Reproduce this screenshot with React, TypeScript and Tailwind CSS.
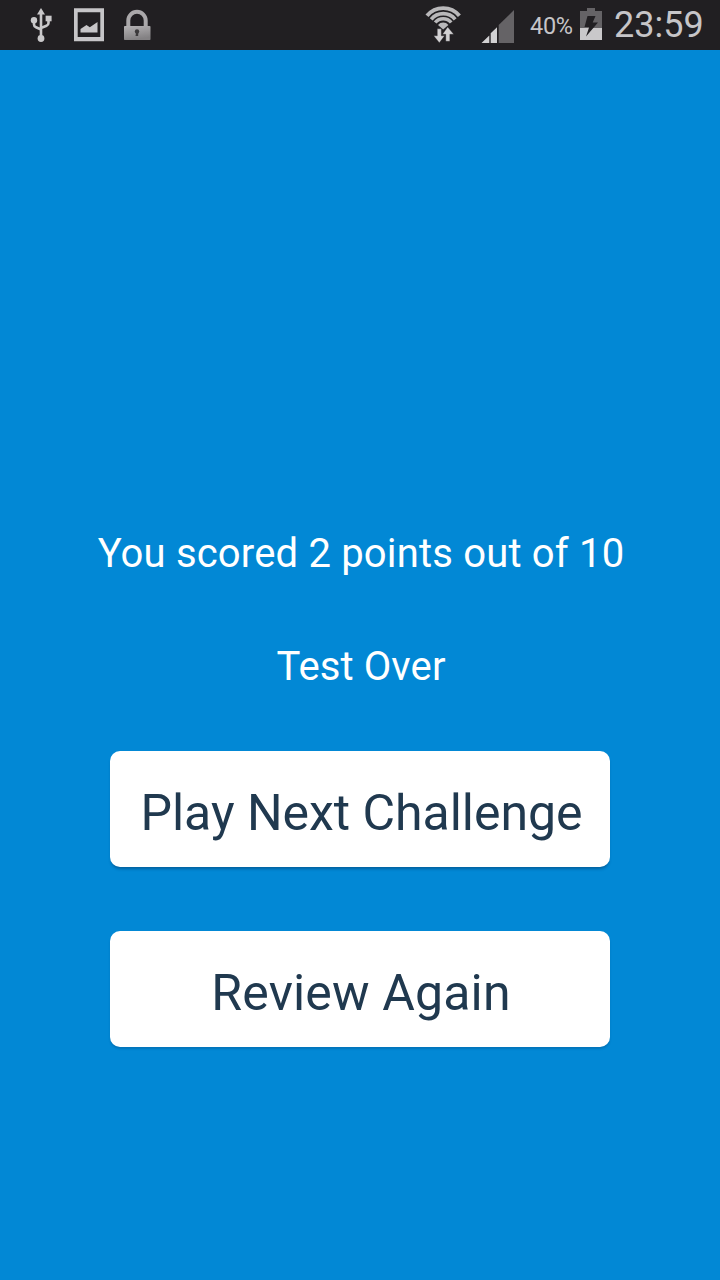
import type { ReactNode } from 'react'

function UsbIcon() {
  return (
    <svg width="22" height="50" viewBox="0 0 22 50" className="ml-[30px] shrink-0" fill="#c9c8ca">
      <path d="M11 8l4 6.500H7z" />
      <path d="M11 12v26M4 20v4.500q0 2 2 2.800l5 2.200M18.500 19v4q0 2-2 2.800L11 28" fill="none" stroke="#c9c8ca" strokeWidth="2.6" />
      <circle cx="4" cy="20.300" r="3.200" />
      <path d="M15.600 15.700h6v5.600h-6z" />
      <circle cx="11" cy="38.500" r="3.400" />
    </svg>
  )
}

function PictureIcon() {
  return (
    <svg width="30" height="50" viewBox="0 0 30 50" className="ml-[22px] shrink-0" fill="#c6c5c8">
      <path fillRule="evenodd" d="M0 8.300h30v33H0zM3.700 12.300v24.700h22.600V12.300z" />
      <path d="M6.500 32.500v-3.500l6-4 3.300 2.200 7.700-5.200v10.500z" />
    </svg>
  )
}

function LockIcon() {
  return (
    <svg width="28" height="50" viewBox="0 0 28 50" className="ml-[19px] shrink-0">
      <defs>
        <linearGradient id="lockBody" x1="0" y1="0" x2="0.3" y2="1">
          <stop offset="0" stopColor="#b4b2b4" />
          <stop offset="1" stopColor="#838183" />
        </linearGradient>
      </defs>
      <path d="M5.300 27v-6.500a8.700 8.700 0 0 1 17.400 0V27" fill="none" stroke="#aaa8aa" strokeWidth="4" />
      <rect x="1" y="26" width="26.500" height="14" rx="0.800" fill="url(#lockBody)" />
      <circle cx="14" cy="31.500" r="2.200" fill="#3c3a3c" />
      <path d="M13.200 32h2v4h-2.700z" fill="#3c3a3c" />
    </svg>
  )
}

function WifiIcon() {
  return (
    <svg width="38" height="50" viewBox="0 0 38 50" className="shrink-0">
      <g fill="none" stroke="#b9b8ba">
        <path d="M2 15.800a21 21 0 0 1 32.400 0" strokeWidth="3.900" />
        <path d="M6.200 19.300a15.500 15.500 0 0 1 24 0" strokeWidth="3.700" />
        <path d="M10.200 22.500a10.300 10.300 0 0 1 16 0" strokeWidth="3.500" />
      </g>
      <path d="M13 25a6.700 6.700 0 0 1 10.400 0L18.200 29.500z" fill="#b9b8ba" />
      <path
        d="M12.300 28.800h4v7h3.300L14.300 42.700l-5.600-6.900h3.600zM24.800 41.300h-4v-7h-3.300l5.200-7.300 6 7.300h-3.900z"
        fill="#d2d1d3"
        stroke="#211f22"
        strokeWidth="0.300"
      />
    </svg>
  )
}

function SignalIcon() {
  return (
    <svg width="34" height="50" viewBox="0 0 34 50" className="ml-[18px] shrink-0">
      <path d="M0.500 43l7.800-7.500V43zM9.700 33.300l6.300-6V43H9.700z" fill="#d2d1d3" />
      <path d="M17.700 25L33 10v33H17.700z" fill="#656366" />
    </svg>
  )
}

function BatteryIcon() {
  return (
    <svg width="22" height="50" viewBox="0 0 22 50" className="ml-[7px] shrink-0">
      <path d="M7 8h8v3h7v17H0V11h7z" fill="#656366" />
      <path d="M0 28h22v12H0z" fill="#c9c8ca" />
      <path d="M7.500 16h8l-2.800 6.500H18L6 36.500 9.200 27H4.500z" fill="#211f22" />
    </svg>
  )
}

function StatusBar() {
  return (
    <header className="flex h-[50px] shrink-0 items-center overflow-hidden bg-[#211f22] text-[#c6c5c8]">
      <UsbIcon />
      <PictureIcon />
      <LockIcon />
      <div className="ml-auto flex h-full items-center pr-[17px]">
        <WifiIcon />
        <SignalIcon />
        <span className="ml-[15px] w-[43px] pt-[2px] text-[23.5px] leading-[24px] tracking-[-0.3px] whitespace-nowrap">40%</span>
        <BatteryIcon />
        <span className="ml-[12px] w-[89px] text-[36px] leading-none whitespace-nowrap">23:59</span>
      </div>
    </header>
  )
}

interface ActionButtonProps {
  children: ReactNode
  className?: string
}

function ActionButton({ children, className = '' }: ActionButtonProps) {
  return (
    <button
      className={`flex h-[116px] w-[500px] items-center justify-center rounded-[10px] bg-white pt-[8px] text-[50px] leading-none whitespace-nowrap text-[#20394f] ${className}`}
    >
      {children}
    </button>
  )
}

export default function App() {
  return (
    <div className="flex h-[1280px] w-[720px] flex-col overflow-hidden bg-[#0288d5] font-['Roboto',sans-serif]">
      <StatusBar />
      <main className="flex flex-1 flex-col items-center pt-[480px] text-white">
        <p className="h-12 pl-[2px] text-[40px] leading-12 tracking-[0.18px] whitespace-nowrap">You scored 2 points out of 10</p>
        <p className="mt-[65px] h-12 pl-[2px] text-[40px] leading-12 tracking-[0.1px] whitespace-nowrap">Test Over</p>
        <ActionButton className="mt-[60px] pl-[3px] tracking-[-0.03px] shadow-[0_3px_3px_-1px_rgba(0,40,80,0.4)]">Play Next Challenge</ActionButton>
        <ActionButton className="mt-16 pl-[2px] tracking-[0.15px] shadow-[0_2px_2px_rgba(0,40,80,0.2)]">Review Again</ActionButton>
      </main>
    </div>
  )
}
